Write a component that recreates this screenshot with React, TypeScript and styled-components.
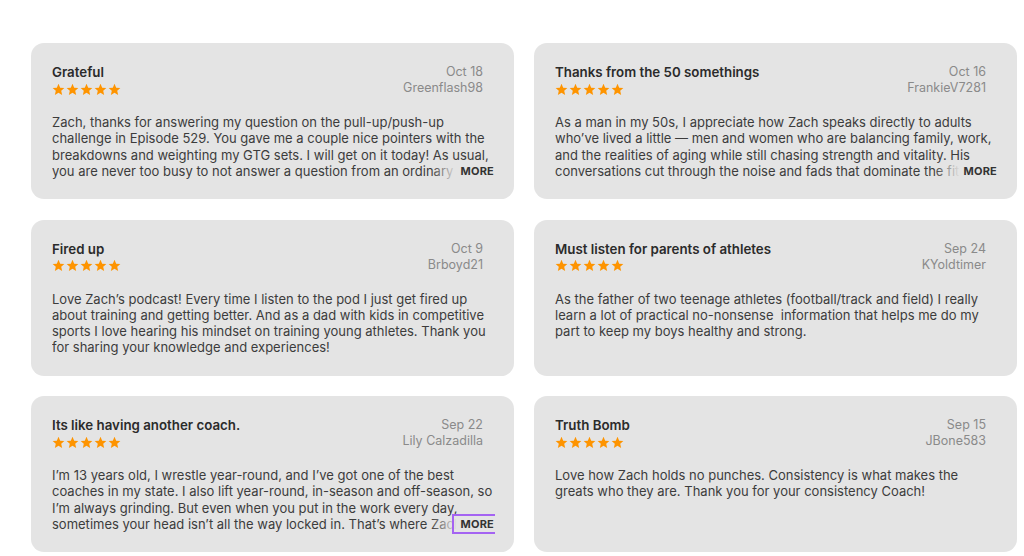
import React from "react";
import styled, { createGlobalStyle, css } from "styled-components";

const Global = createGlobalStyle`
  html, body { margin: 0; padding: 0; background: #ffffff; }
  body {
    font-family: Inter, "Noto Sans", "Liberation Sans", sans-serif;
    -webkit-font-smoothing: antialiased;
  }
`;

type Review = {
  title: string;
  date: string;
  author: string;
  body: string;
  more?: boolean;
  focused?: boolean;
};

const reviews: Review[] = [
  {
    title: "Grateful",
    date: "Oct 18",
    author: "Greenflash98",
    body:
      "Zach, thanks for answering my question on the pull-up/push-up challenge in Episode 529. You gave me a couple nice pointers with the breakdowns and weighting my GTG sets. I will get on it today! As usual, you are never too busy to not answer a question from an ordinary guy like me.",
    more: true,
  },
  {
    title: "Thanks from the 50 somethings",
    date: "Oct 16",
    author: "FrankieV7281",
    body:
      "As a man in my 50s, I appreciate how Zach speaks directly to adults who\u2019ve lived a little \u2014 men and women who are balancing family, work, and the realities of aging while still chasing strength and vitality. His conversations cut through the noise and fads that dominate the fitness world.",
    more: true,
  },
  {
    title: "Fired up",
    date: "Oct 9",
    author: "Brboyd21",
    body:
      "Love Zach\u2019s podcast! Every time I listen to the pod I just get fired up about training and getting better. And as a dad with kids in competitive sports I love hearing his mindset on training young athletes. Thank you for sharing your knowledge and experiences!",
  },
  {
    title: "Must listen for parents of athletes",
    date: "Sep 24",
    author: "KYoldtimer",
    body:
      "As the father of two teenage athletes (football/track and field) I really learn a lot of practical no-nonsense\u00a0 information that helps me do my part to keep my boys healthy and strong.",
  },
  {
    title: "Its like having another coach.",
    date: "Sep 22",
    author: "Lily Calzadilla",
    body:
      "I\u2019m 13 years old, I wrestle year-round, and I\u2019ve got one of the best coaches in my state. I also lift year-round, in-season and off-season, so I\u2019m always grinding. But even when you put in the work every day, sometimes your head isn\u2019t all the way locked in. That\u2019s where Zach comes in.",
    more: true,
    focused: true,
  },
  {
    title: "Truth Bomb",
    date: "Sep 15",
    author: "JBone583",
    body:
      "Love how Zach holds no punches. Consistency is what makes the greats who they are. Thank you for your consistency Coach!",
  },
];

const Page = styled.main`
  width: 1024px;
  height: 556px;
  overflow: hidden;
  box-sizing: border-box;
  padding: 43px 0 0 31px;
`;

const Grid = styled.div`
  display: grid;
  grid-template-columns: 483px 483px;
  grid-auto-rows: 156px;
  column-gap: 20px;
  row-gap: 20.5px;
`;

const Card = styled.article`
  background: #e4e4e4;
  border-radius: 13px;
  padding: 21px 20px 0 21px;
  box-sizing: border-box;
  overflow: hidden;
  display: flex;
  flex-direction: column;
`;

const Header = styled.header`
  display: flex;
  justify-content: space-between;
  padding-right: 11px;
`;

const TitleCol = styled.div`
  display: flex;
  flex-direction: column;
`;

const Title = styled.h3`
  margin: 0;
  font-size: 13.3px;
  font-weight: 600;
  line-height: 16px;
  color: #2b2b2b;
`;

const Stars = styled.div`
  display: flex;
  gap: 1px;
  height: 16px;
  align-items: center;
  margin-top: 1px;
`;

const MetaCol = styled.div`
  display: flex;
  flex-direction: column;
  align-items: flex-end;
`;

const Meta = styled.span`
  font-size: 12.5px;
  line-height: 16px;
  color: #8a8a8a;
`;

const BodyWrap = styled.div`
  position: relative;
  margin-top: 17px;
`;

const Body = styled.p`
  margin: 0;
  font-size: 13px;
  line-height: 16.33px;
  color: #3c3c3c;
  display: -webkit-box;
  -webkit-line-clamp: 4;
  -webkit-box-orient: vertical;
  overflow: hidden;
`;

const More = styled.button<{ $focused?: boolean }>`
  position: absolute;
  right: -1px;
  bottom: 0;
  height: 16px;
  border: none;
  margin: 0;
  padding: 0 1px 0 30px;
  font-family: inherit;
  font-size: 11px;
  font-weight: 700;
  letter-spacing: 0.2px;
  color: #333333;
  background: linear-gradient(
    to right,
    rgba(228, 228, 228, 0) 0px,
    rgba(228, 228, 228, 1) 26px
  );
  display: flex;
  align-items: center;
  ${(p) =>
    p.$focused &&
    css`
      &::after {
        content: "";
        position: absolute;
        left: 21px;
        right: 0;
        top: -2px;
        bottom: -2px;
        border: 2px solid #a463f2;
        border-right: none;
      }
    `}
`;

const Star = () => (
  <svg width="13" height="13" viewBox="0 0 24 24" aria-hidden="true">
    <path
      d="M12 1.6l3.1 7.1 7.7.7-5.8 5.1 1.7 7.6L12 18.1l-6.7 4 1.7-7.6-5.8-5.1 7.7-.7z"
      fill="#fe9400"
    />
  </svg>
);

const ReviewCard = ({ r }: { r: Review }) => (
  <Card>
    <Header>
      <TitleCol>
        <Title>{r.title}</Title>
        <Stars>
          {[0, 1, 2, 3, 4].map((i) => (
            <Star key={i} />
          ))}
        </Stars>
      </TitleCol>
      <MetaCol>
        <Meta>{r.date}</Meta>
        <Meta>{r.author}</Meta>
      </MetaCol>
    </Header>
    <BodyWrap>
      <Body>{r.body}</Body>
      {r.more && <More $focused={r.focused}>MORE</More>}
    </BodyWrap>
  </Card>
);

export default function App() {
  return (
    <>
      <Global />
      <Page>
        <Grid>
          {reviews.map((r) => (
            <ReviewCard key={r.title} r={r} />
          ))}
        </Grid>
      </Page>
    </>
  );
}
